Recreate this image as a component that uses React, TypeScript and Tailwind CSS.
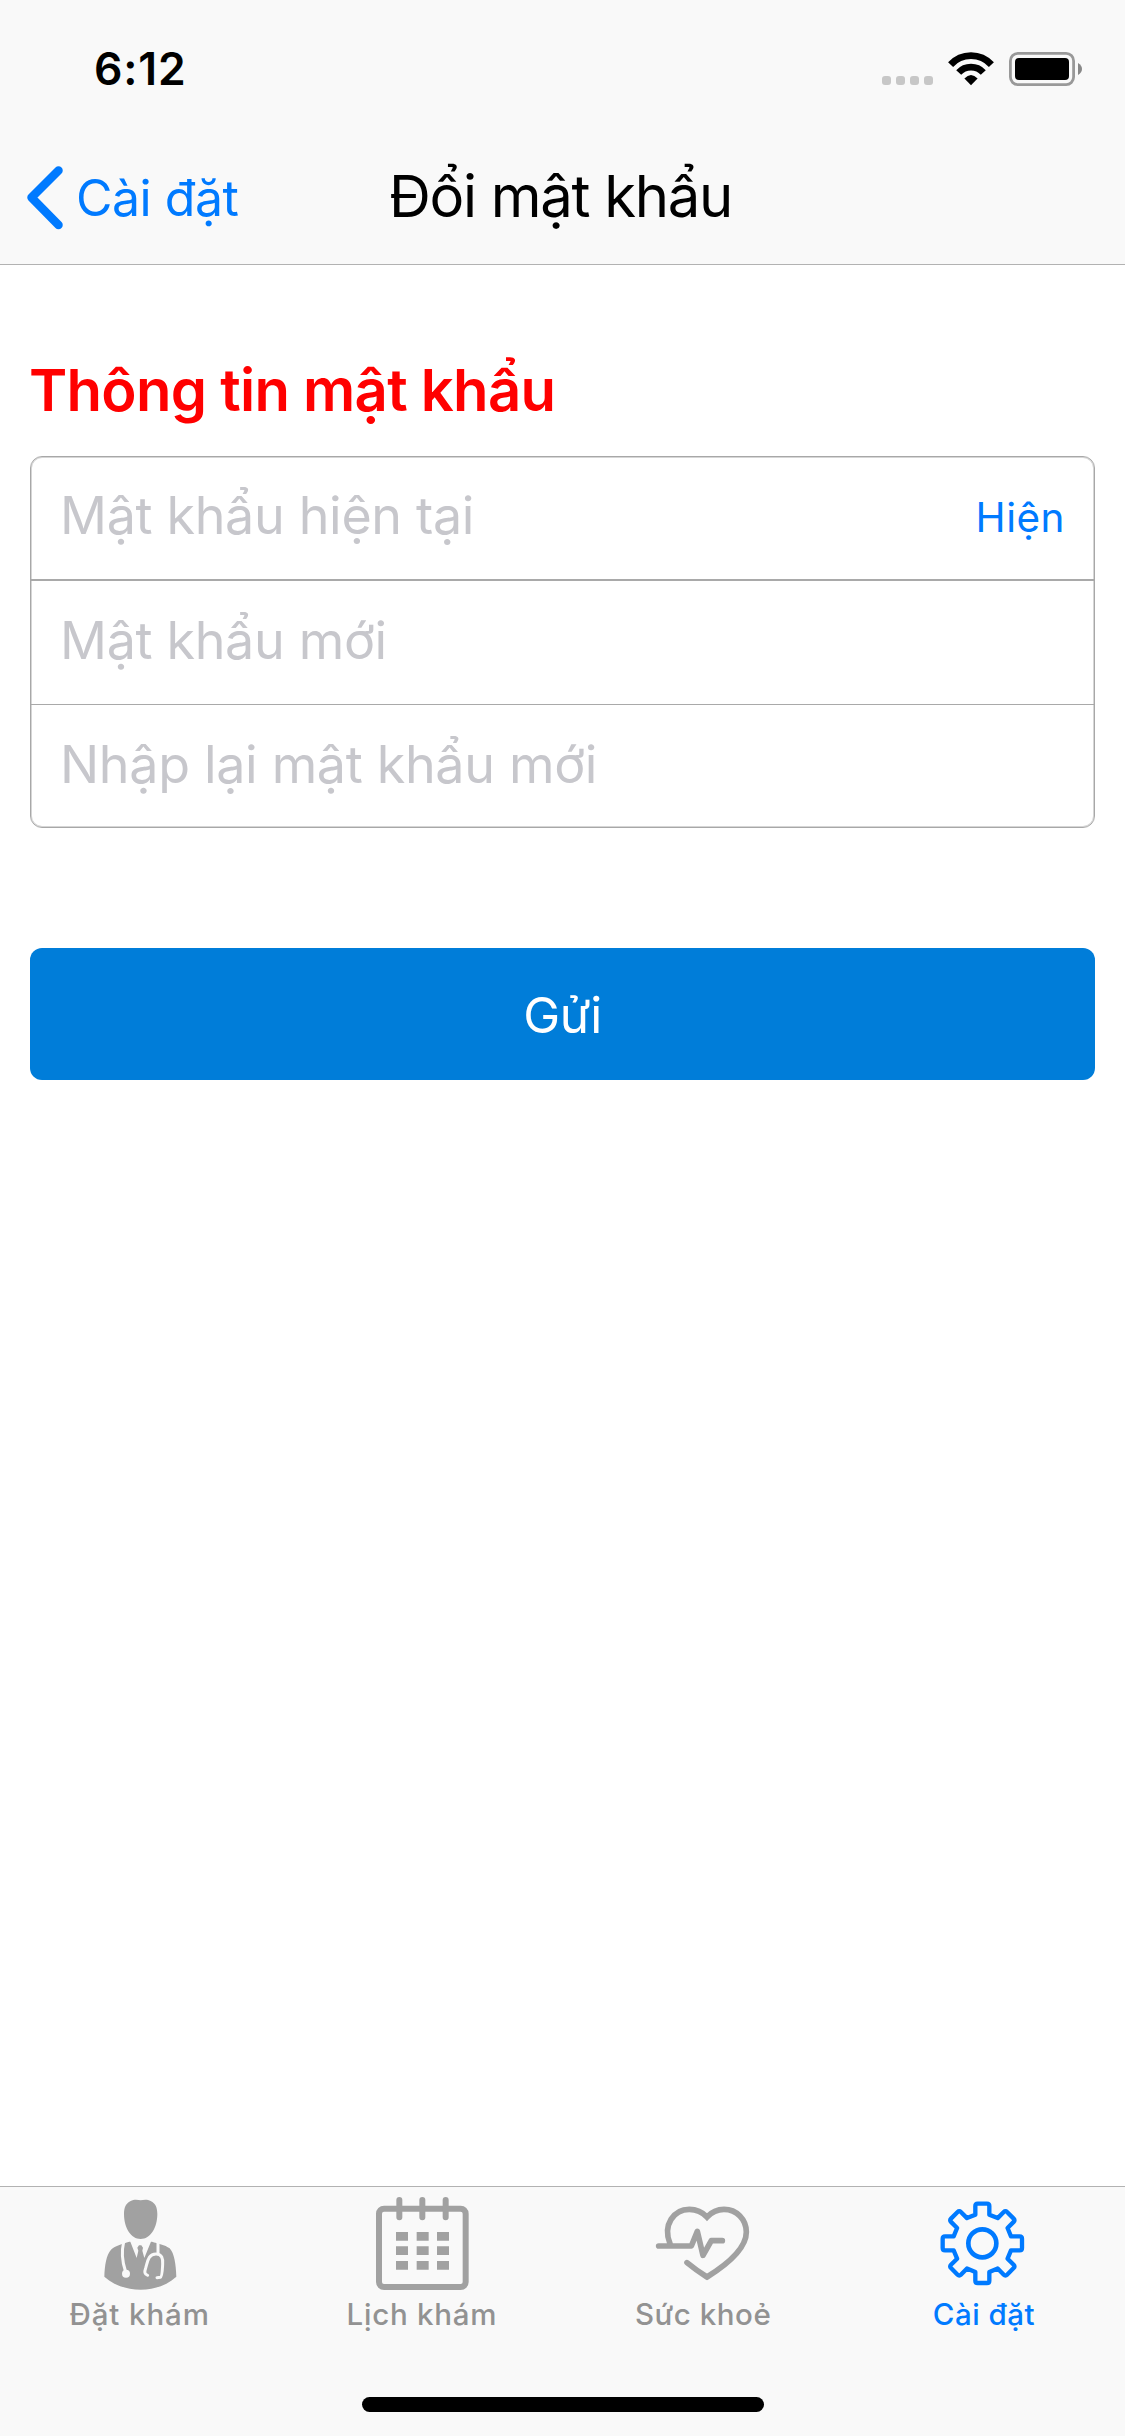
import React from 'react';

const TOOTH: [number, number][] = [[-21, -86], [-21, -112], [-21, -119], [-14, -119], [14, -119], [21, -119], [21, -112], [21, -86]];

function gearPath() {
  let d = '';
  for (let i = 0; i < 8; i++) {
    const a = (i * Math.PI) / 4;
    const p = TOOTH.map(([x, y]) => {
      const px = 248 + x * Math.cos(a) - y * Math.sin(a);
      const py = 190 + x * Math.sin(a) + y * Math.cos(a);
      return `${px.toFixed(1)} ${py.toFixed(1)}`;
    });
    d += `${i === 0 ? 'M' : 'L'}${p[0]} L${p[1]} Q${p[2]} ${p[3]} L${p[4]} Q${p[5]} ${p[6]} L${p[7]} `;
  }
  return d + 'Z';
}

function DoctorIcon() {
  return (
    <svg width="100" height="110" viewBox="92 21 300 330" fill="none">
      <path
        fill="#a1a1a1"
        d="M241 61 C250 59 262 58 271 63 C286 71 291 83 291 102 C291 144 270 177 241 177 C212 177 191 144 191 102 C191 83 196 71 211 63 C220 58 232 59 241 61 Z"
      />
      <path
        fill="#a1a1a1"
        d="M132 290 C133 256 138 224 152 209 C162 198 186 192 207 185 L275 185 C292 191 314 194 328 205 C342 220 347 254 348 290 C320 316 282 329 241 329 C200 329 160 316 132 290 Z"
      />
      <path
        fill="#f9f9f9"
        d="M208 180 L229 234 L234 212 L231 203 L236 196 H243 L248 203 L246 212 L252 234 L274 180 Z"
      />
      <g stroke="#f9f9f9" strokeWidth="9" strokeLinecap="round" strokeLinejoin="round">
        <path d="M190 186 C183 215 186 245 195 272" />
        <path d="M293 186 V220" />
        <path d="M262 286 C252 283 252 276 256 264 C262 244 264 222 287 222 C305 222 308 236 307 252 C306 270 306 290 300 292 L290 293" />
      </g>
      <circle cx="197" cy="281" r="12" fill="#f9f9f9" />
    </svg>
  );
}

function CalendarIcon() {
  return (
    <svg width="100" height="110" viewBox="111 21 300 330" fill="none">
      <rect x="132" y="86" width="260" height="235" rx="15" stroke="#a1a1a1" strokeWidth="18" />
      <path d="M193 60 V112 M262 60 V112 M332 60 V112" stroke="#a1a1a1" strokeWidth="18" strokeLinecap="round" />
      <path
        fill="#a1a1a1"
        d="M183 156h36v26h-36z M245 156h36v26h-36z M306 156h36v26h-36z M183 199h36v26h-36z M245 199h36v26h-36z M306 199h36v26h-36z M183 243h36v26h-36z M245 243h36v26h-36z M306 243h36v26h-36z"
      />
    </svg>
  );
}

function HeartIcon() {
  return (
    <svg width="100" height="110" viewBox="99 21 300 330" fill="none" stroke="#a1a1a1" strokeWidth="17" strokeLinecap="round">
      <path
        strokeLinejoin="miter"
        d="M150 191 C127 134 162 88 208 88 C230 88 248 97 261 111 C274 97 291 88 312 88 C350 88 379 118 379 156 C379 200 330 248 261 291 Q230 272 201 248"
      />
      <path strokeLinejoin="round" d="M116 198 H214 L232 154 L249 226 L274 182 H307" />
    </svg>
  );
}

function GearIcon() {
  return (
    <svg width="100" height="110" viewBox="103 21 300 330" fill="none" stroke="#007aff" strokeWidth="13" strokeLinejoin="round">
      <path d={gearPath()} />
      <circle cx="248" cy="190" r="42" strokeWidth="14" />
    </svg>
  );
}

function StatusIcons() {
  return (
    <div className="flex items-center">
      <div className="mt-[23px] mr-[15px] flex gap-[5px]">
        {[0, 1, 2, 3].map((i) => (
          <span key={i} className="h-[9px] w-[9px] rounded-[3px] bg-[#c7c7c7]" />
        ))}
      </div>
      <svg width="46" height="34" viewBox="948 52 46 34" fill="none" className="mr-[15px]">
        <path d="M950.6 64.6 A27.6 27.6 0 0 1 991.4 64.6" stroke="#000" strokeWidth="6.8" />
        <path d="M958.7 72.5 A16.8 16.8 0 0 1 983.3 72.5" stroke="#000" strokeWidth="6.8" />
        <path d="M964.4 78.6 Q971 71.4 977.6 78.6 L971 85.2 Z" fill="#000" />
      </svg>
      <svg width="74" height="34" viewBox="1009 52 74 34" fill="none">
        <rect x="1010.4" y="53.4" width="63.2" height="31.2" rx="7.5" stroke="#999" strokeWidth="2.8" />
        <rect x="1015" y="58" width="54" height="22" rx="4" fill="#000" />
        <path d="M1078 63 Q1082 65.500 1082 69 Q1082 72.500 1078 75 Z" fill="#888" />
      </svg>
    </div>
  );
}

const TABS = [
  { label: 'Đặt khám', icon: <DoctorIcon />, style: 'text-[#929292] pr-[2px] tracking-[0.9px]' },
  { label: 'Lịch khám', icon: <CalendarIcon />, style: 'text-[#929292] tracking-[0.75px]' },
  { label: 'Sức khoẻ', icon: <HeartIcon />, style: 'text-[#929292] tracking-[0.55px]' },
  { label: 'Cài đặt', icon: <GearIcon />, style: 'text-[#007aff] pr-[1px] tracking-[0.5px]' },
];

export default function App() {
  return (
    <div className="flex h-[2436px] w-[1125px] flex-col overflow-hidden bg-white font-['Inter','Noto_Sans',sans-serif]">
      <header className="flex h-[265px] shrink-0 flex-col border-b border-[#b2b2b2] bg-[#f9f9f9]">
        <div className="flex h-[138px] items-center justify-between pr-[42px] pl-[94px]">
          <span className="text-[44.5px] leading-[54px] font-semibold tracking-[0.84px] text-black">6:12</span>
          <StatusIcons />
        </div>
        <div className="flex flex-1 items-center pb-[6px]">
          <button className="flex w-[389px] items-center pl-[26px] text-[#007aff]">
            <svg width="38" height="66" viewBox="26 166 38 66" fill="none">
              <path d="M58.500 171.500 L31.500 198.500 L58.500 226" stroke="#007aff" strokeWidth="8.500" strokeLinecap="round" strokeLinejoin="round" />
            </svg>
            <span className="ml-[12px] text-[50px] leading-[60px] tracking-[-0.5px] whitespace-nowrap">Cài đặt</span>
          </button>
          <h1 className="pb-[5px] text-[58px] leading-[70px] font-normal tracking-[-1.3px] whitespace-nowrap text-black">Đổi mật khẩu</h1>
        </div>
      </header>

      <main className="flex flex-1 flex-col px-[30px] pt-[90px]">
        <h2 className="-ml-px text-[58px] leading-[70px] font-semibold tracking-[-0.72px] whitespace-nowrap text-[#ff0000]">Thông tin mật khẩu</h2>
        <div className="mt-[31px] flex h-[372px] flex-col rounded-[12px] border border-[#a8a8a8] text-[52px] leading-[62px] tracking-[-0.33px] text-[#c7c7cc] shadow-[inset_0_0_0_1px_#d6d6d6]">
          <div className="flex h-[124px] items-center justify-between border-b-2 border-[#a9a9a9] px-[29px] pb-[5px]">
            <span>Mật khẩu hiện tại</span>
            <button className="pt-[5px] text-[40.5px] leading-[50px] tracking-[0.49px] text-[#007aff]">Hiện</button>
          </div>
          <div className="flex h-[124px] items-center border-b border-[#a9a9a9] px-[29px] pb-[4px]">
            <span>Mật khẩu mới</span>
          </div>
          <div className="flex h-[122px] items-center px-[29px] pb-[3px]">
            <span>Nhập lại mật khẩu mới</span>
          </div>
        </div>
        <button className="mt-[120px] flex h-[132px] items-center justify-center rounded-[12px] bg-[#007dd9] pt-[2px] text-[49.5px] leading-[60px] tracking-[-0.3px] text-white">
          Gửi
        </button>
      </main>

      <footer className="flex h-[250px] shrink-0 flex-col items-center border-t border-[#b2b2b2] bg-[#f9f9f9]">
        <nav className="grid w-full grid-cols-4">
          {TABS.map((tab) => (
            <button key={tab.label} className="flex flex-col items-center">
              {tab.icon}
              <span className={`pt-px text-[29.5px] leading-[32px] font-medium whitespace-nowrap ${tab.style}`}>{tab.label}</span>
            </button>
          ))}
        </nav>
        <div className="mt-[67px] h-[15px] w-[402px] rounded-full bg-black" />
      </footer>
    </div>
  );
}
